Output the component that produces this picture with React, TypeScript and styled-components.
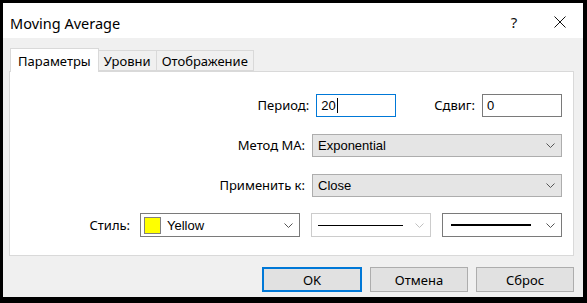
import styled, { createGlobalStyle } from "styled-components";

const GlobalStyle = createGlobalStyle`
  html, body {
    margin: 0;
    padding: 0;
    background: #000;
  }
  body {
    font-family: "Liberation Sans", Arial, sans-serif;
    font-size: 13px;
    color: #000;
  }
`;

const Screen = styled.div`
  width: 587px;
  height: 303px;
  padding: 3px 4px 6px 3px;
  box-sizing: border-box;
  background: #000;
`;

const Window = styled.div`
  width: 580px;
  height: 294px;
  display: flex;
  flex-direction: column;
  background: #f0f0f0;
`;

const TitleBar = styled.div`
  height: 35px;
  flex: none;
  background: #fff;
  display: flex;
  align-items: center;
  padding-left: 7px;
`;

const Title = styled.div`
  flex: 1;
  font-family: "Noto Sans", "Open Sans", sans-serif;
  font-size: 14.5px;
  color: #000;
  padding-top: 4px;
`;

const TitleButton = styled.div`
  width: 46px;
  height: 35px;
  display: flex;
  align-items: center;
  justify-content: center;
  color: #111;
  font-family: "Noto Sans", sans-serif;
  font-size: 15px;
  padding-top: 2px;
  box-sizing: border-box;
`;

const Body = styled.div`
  flex: 1;
  display: flex;
  flex-direction: column;
  padding: 10px 9px 0 6px;
`;

const TabStrip = styled.div`
  display: flex;
  align-items: flex-end;
  height: 23px;
  padding-left: 1px;
  position: relative;
  z-index: 1;
`;

const Tab = styled.div<{ $active?: boolean }>`
  height: ${(p) => (p.$active ? 24 : 21)}px;
  margin-bottom: ${(p) => (p.$active ? -1 : 0)}px;
  padding: 0 ${(p) => (p.$active ? 7 : 5)}px;
  display: flex;
  align-items: center;
  background: ${(p) => (p.$active ? "#fff" : "#f0f0f0")};
  border: 1px solid #d9d9d9;
  border-bottom: ${(p) => (p.$active ? "none" : "1px solid #d9d9d9")};
  margin-left: ${(p) => (p.$active ? 0 : -1)}px;
  font-family: "Noto Sans", sans-serif;
  font-size: 13px;
  box-sizing: border-box;
`;

const Panel = styled.div`
  height: 185px;
  box-sizing: border-box;
  background: #fff;
  border: 1px solid #d9d9d9;
  padding: 21px 11px 0 0;
  display: flex;
  flex-direction: column;
  gap: 16px;
`;

const Row = styled.div`
  display: flex;
  justify-content: flex-end;
  align-items: center;
  height: 24px;
`;

const Label = styled.div<{ $width?: number }>`
  width: ${(p) => (p.$width ? `${p.$width}px` : "auto")};
  text-align: right;
  font-family: "Noto Sans", sans-serif;
  font-size: 13px;
  color: #000;
  margin-right: 7px;
`;

const TextInput = styled.div<{ $focused?: boolean; $gapAfter?: number }>`
  width: 80px;
  height: 23px;
  box-sizing: border-box;
  border: 1px solid ${(p) => (p.$focused ? "#0078d7" : "#7a7a7a")};
  background: #fff;
  padding-left: 4px;
  display: flex;
  align-items: center;
  font-size: 13px;
  margin-right: ${(p) => p.$gapAfter ?? 0}px;
`;

const Caret = styled.span`
  display: inline-block;
  width: 1px;
  height: 15px;
  background: #000;
  margin-left: 1px;
`;

const Select = styled.div<{ $width: number; $variant?: "combo" | "white" | "disabled" }>`
  width: ${(p) => p.$width}px;
  height: ${(p) => (p.$variant === "combo" ? 23 : 24)}px;
  box-sizing: border-box;
  border: 1px solid
    ${(p) => (p.$variant === "disabled" ? "#cccccc" : p.$variant === "combo" ? "#adadad" : "#7a7a7a")};
  background: ${(p) => (p.$variant === "combo" ? "#e5e5e5" : "#fff")};
  display: flex;
  align-items: center;
  padding: 0 6px 0 5px;
  gap: 6px;
  font-size: 13px;
  flex: none;
`;

const SelectText = styled.div`
  flex: 1;
`;

const Swatch = styled.div`
  width: 17px;
  height: 17px;
  box-sizing: border-box;
  background: #ffff00;
  border: 1px solid #808080;
  margin-left: -2px;
`;

const LineSample = styled.div<{ $thick?: boolean; $len: number }>`
  width: ${(p) => p.$len}px;
  height: ${(p) => (p.$thick ? 2 : 1)}px;
  background: #000;
  margin-left: ${(p) => (p.$thick ? 3 : 1)}px;
`;

const Spacer = styled.div`
  flex: 1;
`;

const Chevron = ({ color = "#555" }: { color?: string }) => (
  <svg width="9" height="5" viewBox="0 0 9 5" style={{ flex: "none" }}>
    <path d="M0.5 0.5 L4.5 4.5 L8.5 0.5" fill="none" stroke={color} strokeWidth="1" />
  </svg>
);

const StyleRow = styled(Row)`
  gap: 11px;
`;

const StyleLabel = styled(Label)`
  margin-right: -1px;
`;

const ButtonRow = styled.div`
  display: flex;
  justify-content: flex-end;
  gap: 8px;
  padding: 11px 0 0 0;
`;

const Button = styled.div<{ $default?: boolean }>`
  width: ${(p) => (p.$default ? 100 : 98)}px;
  height: 25px;
  box-sizing: border-box;
  background: #e1e1e1;
  border: ${(p) => (p.$default ? "2px solid #0078d7" : "1px solid #adadad")};
  display: flex;
  align-items: center;
  justify-content: center;
  font-family: "Noto Sans", sans-serif;
  font-size: 13px;
`;

export default function App() {
  return (
    <Screen>
      <GlobalStyle />
      <Window>
        <TitleBar>
          <Title>Moving Average</Title>
          <TitleButton>?</TitleButton>
          <TitleButton>
            <svg width="12" height="12" viewBox="0 0 12 12">
              <path d="M0.5 0.5 L11.5 11.5 M11.5 0.5 L0.5 11.5" stroke="#111" strokeWidth="1" />
            </svg>
          </TitleButton>
        </TitleBar>
        <Body>
          <TabStrip>
            <Tab $active>Параметры</Tab>
            <Tab>Уровни</Tab>
            <Tab>Отображение</Tab>
          </TabStrip>
          <Panel>
            <Row>
              <Label $width={80}>Период:</Label>
              <TextInput $focused $gapAfter={38}>
                20
                <Caret />
              </TextInput>
              <Label>Сдвиг:</Label>
              <TextInput>0</TextInput>
            </Row>
            <Row>
              <Label $width={100}>Метод МА:</Label>
              <Select $width={250} $variant="combo">
                <SelectText>Exponential</SelectText>
                <Chevron />
              </Select>
            </Row>
            <Row>
              <Label $width={100}>Применить к:</Label>
              <Select $width={250} $variant="combo">
                <SelectText>Close</SelectText>
                <Chevron />
              </Select>
            </Row>
            <StyleRow>
              <StyleLabel>Стиль:</StyleLabel>
              <Select $width={160}>
                <Swatch />
                <SelectText>Yellow</SelectText>
                <Chevron />
              </Select>
              <Select $width={120} $variant="disabled">
                <LineSample $len={85} />
                <Spacer />
                <Chevron color="#c0c0c0" />
              </Select>
              <Select $width={120}>
                <LineSample $len={80} $thick />
                <Spacer />
                <Chevron />
              </Select>
            </StyleRow>
          </Panel>
          <ButtonRow>
            <Button $default>OK</Button>
            <Button>Отмена</Button>
            <Button>Сброс</Button>
          </ButtonRow>
        </Body>
      </Window>
    </Screen>
  );
}
